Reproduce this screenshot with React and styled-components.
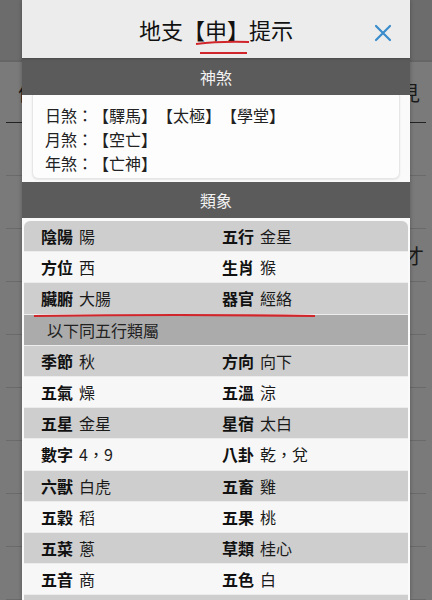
import styled, { createGlobalStyle } from "styled-components";

const Global = createGlobalStyle`
  html, body { margin: 0; padding: 0; }
  body {
    font-family: "Noto Sans CJK TC", "Noto Sans", sans-serif;
    background: #777;
    text-spacing-trim: space-all;
  }
`;

const Page = styled.div`
  position: relative;
  width: 432px;
  height: 600px;
  overflow: hidden;
  background: #7a7a7a;
`;

const Underlay = styled.div`
  display: flex;
  flex-direction: column;
`;

const UnderTop = styled.div`
  height: 60px;
  background: #6c6c6c;
  border-bottom: 2px solid #666;
`;

const UnderHead = styled.div`
  height: 60px;
  display: flex;
  justify-content: space-between;
  align-items: center;
  padding: 0 6px 0 12px;
  margin: 0 6px;
  border-bottom: 1px solid #222;
  color: #1a1a1a;
  font-size: 20px;
`;

const UnderRow = styled.div`
  height: 52px;
  margin: 0 6px;
  border-bottom: 1px solid #6a6a6a;
  display: flex;
  justify-content: flex-end;
  align-items: center;
  padding-right: 2px;
  color: #1a1a1a;
  font-size: 20px;
`;

const Modal = styled.div`
  position: absolute;
  left: 22px;
  top: 0;
  width: 388px;
  height: 600px;
  background: #fafafa;
  overflow: hidden;
  box-shadow: 0 0 4px rgba(0, 0, 0, 0.3);
`;

const Header = styled.div`
  position: relative;
  height: 58px;
  background: #ececec;
  display: flex;
  align-items: center;
  justify-content: center;
  font-size: 22px;
  color: #111;
  box-shadow: 0 1px 2px rgba(0, 0, 0, 0.2);
`;

const Close = styled.div`
  position: absolute;
  right: 18px;
  top: 16px;
  width: 18px;
  height: 18px;
`;

const Section = styled.div`
  height: ${(p) => p.$h || 37}px;
  background: #5b5b5b;
  color: #f2f2f2;
  font-size: 16px;
  display: flex;
  align-items: center;
  justify-content: center;
`;

const Card = styled.div`
  margin: 0 10px 3px;
  padding: 8px 12px 3px;
  background: #fdfdfd;
  border: 1px solid #e6e6e6;
  border-top: none;
  border-radius: 0 0 6px 6px;
  box-shadow: 0 1px 2px rgba(0, 0, 0, 0.08);
  color: #222;
  font-size: 16px;
  line-height: 24px;
`;

const Table = styled.div`
  margin: 3px 2px 0;
  border-radius: 6px 6px 0 0;
  overflow: hidden;
`;

const Row = styled.div`
  display: grid;
  grid-template-columns: 181px 1fr;
  align-items: center;
  height: 30.2px;
  padding-left: 17px;
  border-bottom: 1px solid #ececec;
  background: ${(p) => (p.$light ? "#f7f7f7" : "#cecece")};
  font-size: 16px;
  color: #111;
`;

const Note = styled.div`
  height: 30.2px;
  display: flex;
  align-items: center;
  padding-left: 23px;
  border-bottom: 1px solid #ececec;
  background: #ababab;
  font-size: 16px;
  color: #222;
`;

const Label = styled.b`
  font-weight: 700;
  margin-right: 6px;
`;

const Value = styled.span`
  font-weight: 400;
  color: #1a1a1a;
`;

const Marks = styled.svg`
  position: absolute;
  left: 0;
  top: 0;
  pointer-events: none;
`;

const rows1 = [
  ["陰陽", "陽", "五行", "金星"],
  ["方位", "西", "生肖", "猴"],
  ["臟腑", "大腸", "器官", "經絡"],
];

const rows2 = [
  ["季節", "秋", "方向", "向下"],
  ["五氣", "燥", "五溫", "涼"],
  ["五星", "金星", "星宿", "太白"],
  ["數字", "4，9", "八卦", "乾，兌"],
  ["六獸", "白虎", "五畜", "雞"],
  ["五穀", "稻", "五果", "桃"],
  ["五菜", "蔥", "草類", "桂心"],
  ["五音", "商", "五色", "白"],
];

const Cells = ({ r }) => (
  <>
    <div>
      <Label>{r[0]}</Label>
      <Value>{r[1]}</Value>
    </div>
    <div>
      <Label>{r[2]}</Label>
      <Value>{r[3]}</Value>
    </div>
  </>
);

export default function App() {
  return (
    <Page>
      <Global />
      <Underlay>
        <UnderTop />
        <UnderHead>
          <span>仇</span>
          <span>見</span>
        </UnderHead>
        {Array.from({ length: 10 }).map((_, i) => (
          <UnderRow key={i}>{i === 2 ? "才" : ""}</UnderRow>
        ))}
      </Underlay>

      <Modal>
        <Header>
          地支【申】提示
          <Close>
            <svg width="18" height="18" viewBox="0 0 18 18">
              <path d="M2 2 L16 16 M16 2 L2 16" stroke="#3a8ccc" strokeWidth="2.2" strokeLinecap="round" />
            </svg>
          </Close>
        </Header>
        <Section>神煞</Section>
        <Card>
          <div>日煞：【驛馬】【太極】【學堂】</div>
          <div>月煞：【空亡】</div>
          <div>年煞：【亡神】</div>
        </Card>
        <Section $h={36}>類象</Section>
        <Table>
          {rows1.map((r, i) => (
            <Row key={r[0]} $light={i % 2 === 1}>
              <Cells r={r} />
            </Row>
          ))}
          <Note>以下同五行類屬</Note>
          {rows2.map((r, i) => (
            <Row key={r[0]} $light={i % 2 === 1}>
              <Cells r={r} />
            </Row>
          ))}
          <Row />
        </Table>
      </Modal>

      <Marks width="432" height="600" viewBox="0 0 432 600">
        <path d="M196 44 Q220 41 249 42" stroke="#d0262b" strokeWidth="2.2" fill="none" />
        <path d="M200 53 L247 53" stroke="#d0262b" strokeWidth="2.2" fill="none" />
        <path d="M34 316 Q180 314 315 316" stroke="#d0262b" strokeWidth="2.2" fill="none" />
      </Marks>
    </Page>
  );
}
